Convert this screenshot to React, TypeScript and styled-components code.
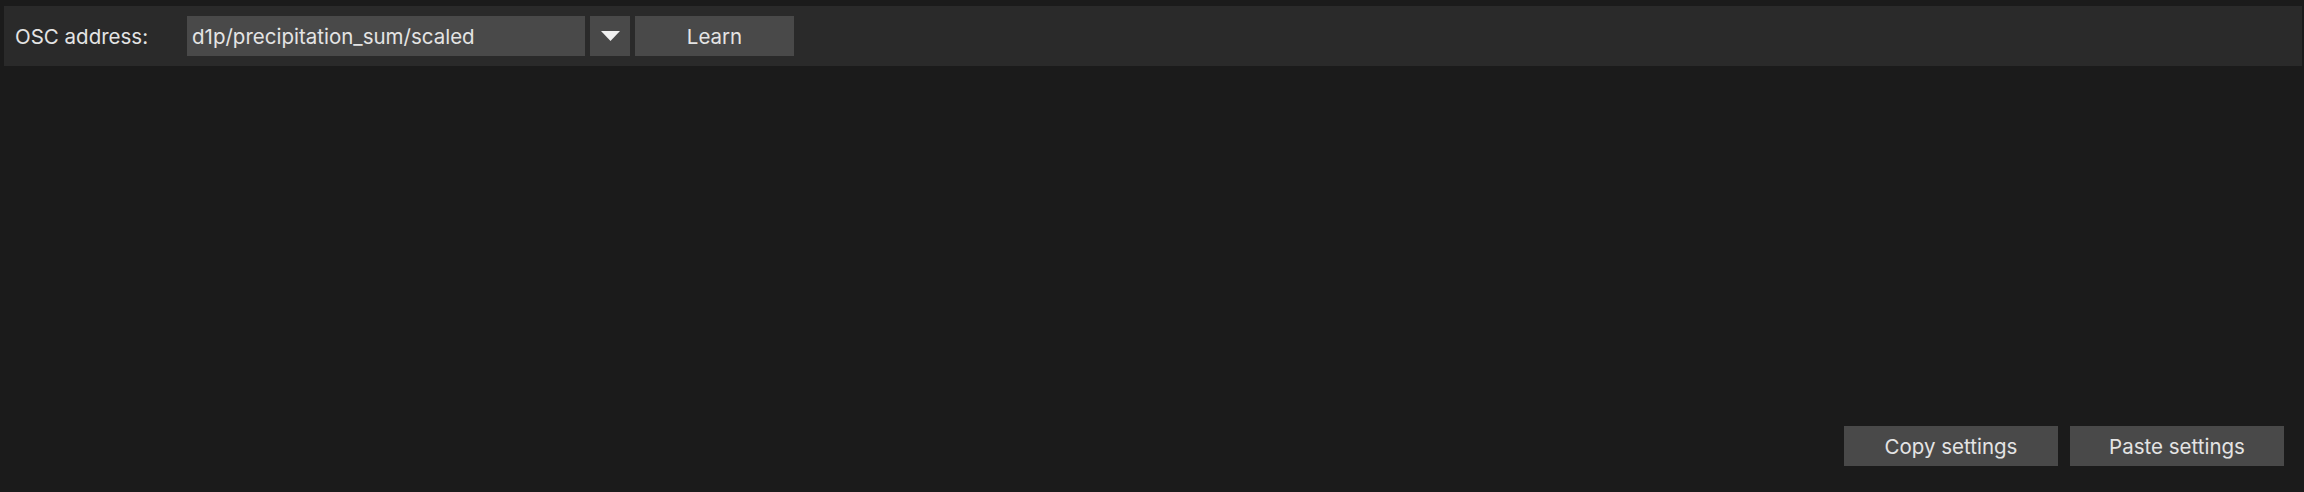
import React from 'react'
import styled, { createGlobalStyle } from 'styled-components'

const Global = createGlobalStyle`
  html, body {
    margin: 0;
    padding: 0;
    background: #1b1b1b;
  }
  body {
    font-family: Inter, "Liberation Sans", sans-serif;
    color: #e4e4e4;
  }
`

const Page = styled.div`
  height: 492px;
  display: flex;
  flex-direction: column;
  justify-content: space-between;
`

const Toolbar = styled.div`
  margin: 6px 2px 0 4px;
  height: 60px;
  background: #2a2a2a;
  display: flex;
  align-items: center;
  padding-left: 11px;
  box-sizing: border-box;
`

const Label = styled.span`
  width: 172px;
  font-size: 20.5px;
`

const Field = styled.div`
  width: 398px;
  height: 40px;
  background: #494949;
  display: flex;
  align-items: center;
  padding-left: 5px;
  box-sizing: border-box;
  font-size: 20.5px;
`

const Button = styled.button<{ w: number }>`
  width: ${(p) => p.w}px;
  height: 40px;
  border: none;
  background: #494949;
  color: #e4e4e4;
  font-family: Inter, "Liberation Sans", sans-serif;
  font-size: 20.5px;
  padding: 0;
  display: flex;
  align-items: center;
  justify-content: center;
`

const Dropdown = styled(Button)`
  margin-left: 5px;
`

const Learn = styled(Button)`
  margin-left: 5px;
`

const Footer = styled.div`
  display: flex;
  justify-content: flex-end;
  gap: 12px;
  padding: 0 20px 26px 0;
`

export default function App() {
  return (
    <>
      <Global />
      <Page>
        <Toolbar>
          <Label>OSC address:</Label>
          <Field>d1p/precipitation_sum/scaled</Field>
          <Dropdown w={40}>
            <svg width="19" height="10" viewBox="0 0 19 10">
              <polygon points="0,0 19,0 9.5,10" fill="#f0f0f0" />
            </svg>
          </Dropdown>
          <Learn w={159}>Learn</Learn>
        </Toolbar>
        <Footer>
          <Button w={214}>Copy settings</Button>
          <Button w={214}>Paste settings</Button>
        </Footer>
      </Page>
    </>
  )
}
